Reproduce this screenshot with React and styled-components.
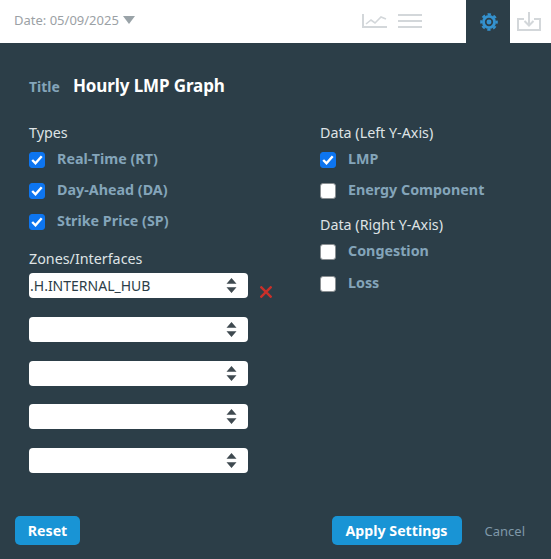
import React from 'react';
import styled, { createGlobalStyle } from 'styled-components';

const GlobalStyle = createGlobalStyle`
  html, body {
    margin: 0;
    padding: 0;
    background: #2c3e48;
  }
  * {
    box-sizing: border-box;
  }
`;

const Page = styled.div`
  width: 551px;
  height: 559px;
  display: flex;
  flex-direction: column;
  font-family: "Noto Sans", "Open Sans", sans-serif;
  background: #2c3e48;
  overflow: hidden;
`;

const TopBar = styled.div`
  height: 43px;
  display: flex;
  align-items: stretch;
  background: #fff;
`;

const DatePicker = styled.div`
  display: flex;
  align-items: flex-start;
  gap: 4px;
  padding: 11px 0 0 14px;
  font-size: 13px;
  line-height: 18px;
  color: #9ba1a5;
`;

const Caret = styled.span`
  width: 0;
  height: 0;
  margin-top: 5px;
  border-left: 6px solid transparent;
  border-right: 6px solid transparent;
  border-top: 8px solid #9aa3a8;
`;

const ChartTools = styled.div`
  margin-left: auto;
  display: flex;
  align-items: flex-start;
  gap: 11px;
  padding: 13px 44px 0 0;
`;

const TabIcon = styled.div`
  width: ${(props) => props.width}px;
  display: flex;
  justify-content: center;
  padding: 12px ${(props) => props.padRight || 0}px 0 ${(props) => props.padLeft || 0}px;
  background: ${(props) => (props.active ? '#2c3e48' : '#fff')};
`;

const Body = styled.div`
  flex: 1;
  display: flex;
  flex-direction: column;
  padding: 31px 15px 14px;
`;

const TitleRow = styled.div`
  display: flex;
  align-items: baseline;
  gap: 13px;
  padding-left: 14px;
  height: 24px;
`;

const TitleLabel = styled.span`
  font-size: 14px;
  font-weight: 700;
  color: #84a5ba;
`;

const TitleText = styled.span`
  font-size: 17px;
  font-weight: 700;
  letter-spacing: -0.1px;
  color: #fff;
`;

const Columns = styled.div`
  display: flex;
  margin-top: 25px;
  padding-left: 14px;
`;

const LeftColumn = styled.div`
  width: 291px;
`;

const RightColumn = styled.div`
  flex: 1;
`;

const SectionLabel = styled.div`
  font-size: 14.3px;
  line-height: 20px;
  height: 21px;
  color: #dfe3e5;
  margin-top: ${(props) => props.gap || 0}px;
`;

const CheckRow = styled.label`
  display: flex;
  align-items: center;
  gap: 12px;
  height: 31px;
  margin-top: ${(props) => props.gap || 0}px;
`;

const CheckBox = styled.span`
  width: 16px;
  height: 16px;
  flex: none;
  margin-top: 1px;
  display: flex;
  align-items: center;
  justify-content: center;
  border-radius: 3px;
  background: ${(props) => (props.checked ? '#0d75f0' : '#fff')};
  border: 1px solid ${(props) => (props.checked ? '#0d75f0' : '#8a8f92')};
`;

const CheckText = styled.span`
  font-size: 14.3px;
  font-weight: 700;
  margin-top: -2px;
  color: #84a5ba;
`;

const ZoneRow = styled.div`
  display: flex;
  align-items: flex-start;
  gap: 12px;
  margin-top: ${(props) => props.gap}px;
`;

const ZoneSelect = styled.div`
  width: 219px;
  height: 25px;
  display: flex;
  align-items: center;
  justify-content: space-between;
  padding: 0 11px 0 1px;
  background: #fff;
  border-radius: 4px;
  font-size: 14px;
  color: #2c3e48;
`;

const Footer = styled.div`
  margin-top: auto;
  display: flex;
  align-items: center;
`;

const ActionButton = styled.button`
  width: ${(props) => props.width}px;
  height: 29px;
  padding: 0;
  border: none;
  border-radius: 5px;
  background: #1994d5;
  color: #fff;
  font-family: inherit;
  font-size: 14.2px;
  font-weight: 700;
`;

const ApplyGroup = styled.div`
  margin-left: auto;
  display: flex;
  align-items: center;
  gap: 23px;
  padding-right: 11px;
`;

const CancelLink = styled.span`
  font-size: 13px;
  color: #7f98a8;
`;

const RemoveButton = styled.span`
  display: flex;
  margin-top: 13px;
`;

const ChartIcon = () => (
  <svg width="25" height="16" viewBox="0 0 25 16" fill="none" stroke="#d3d7da" strokeWidth="2">
    <path d="M1 1v13h24" />
    <path d="M4 11l5-4 4 3 6-6 5 2" strokeWidth="1.6" />
  </svg>
);

const ListIcon = () => (
  <svg width="24" height="15" viewBox="0 0 24 15" fill="none" stroke="#d3d7da" strokeWidth="2">
    <path d="M0 2h24M0 8h24M0 14h24" />
  </svg>
);

const GearIcon = () => (
  <svg width="20" height="20" viewBox="0 0 20 20" fill="none">
    <circle cx="10" cy="10" r="7" fill="#3492cf" />
    <circle cx="10" cy="10" r="7.800" stroke="#3492cf" strokeWidth="2" strokeDasharray="3.400 2.730" strokeDashoffset="1.700" />
    <circle cx="10" cy="10" r="3.300" stroke="#2c3e48" strokeWidth="1.700" />
  </svg>
);

const DownloadIcon = () => (
  <svg width="24" height="19" viewBox="0 0 24 19" fill="none" stroke="#d3d7da" strokeWidth="2">
    <path d="M7 7H1v11h22V7h-6" />
    <path d="M12 0v13M7.500 9l4.500 4.500 4.500-4.500" />
  </svg>
);

const TickIcon = () => (
  <svg width="12" height="10" viewBox="0 0 12 10" fill="none" stroke="#fff" strokeWidth="2.400">
    <path d="M1.200 5l3.300 3.300 6.200-7" />
  </svg>
);

const SpinnerIcon = () => (
  <svg width="11" height="15" viewBox="0 0 11 15" fill="#3f4a50">
    <path d="M5.500 0l5 5.800H.5zM.5 9.200h10l-5 5.800z" />
  </svg>
);

const RemoveIcon = () => (
  <svg width="12" height="12" viewBox="0 0 12 12" fill="none" stroke="#c8302a" strokeWidth="2.400">
    <path d="M.5.500l11 11M11.500.500l-11 11" />
  </svg>
);

const Check = ({ checked, gap, children }) => (
  <CheckRow gap={gap}>
    <CheckBox checked={checked}>{checked && <TickIcon />}</CheckBox>
    <CheckText>{children}</CheckText>
  </CheckRow>
);

const Zone = ({ gap, value, onRemove }) => (
  <ZoneRow gap={gap}>
    <ZoneSelect>
      <span>{value}</span>
      <SpinnerIcon />
    </ZoneSelect>
    {onRemove && (
      <RemoveButton>
        <RemoveIcon />
      </RemoveButton>
    )}
  </ZoneRow>
);

export default function App() {
  return (
    <Page>
      <GlobalStyle />
      <TopBar>
        <DatePicker>
          Date: 05/09/2025
          <Caret />
        </DatePicker>
        <ChartTools>
          <ChartIcon />
          <ListIcon />
        </ChartTools>
        <TabIcon width={44} padLeft={2} active>
          <GearIcon />
        </TabIcon>
        <TabIcon width={41} padRight={3}>
          <DownloadIcon />
        </TabIcon>
      </TopBar>
      <Body>
        <TitleRow>
          <TitleLabel>Title</TitleLabel>
          <TitleText>Hourly LMP Graph</TitleText>
        </TitleRow>
        <Columns>
          <LeftColumn>
            <SectionLabel>Types</SectionLabel>
            <Check checked>Real-Time (RT)</Check>
            <Check checked>Day-Ahead (DA)</Check>
            <Check checked>Strike Price (SP)</Check>
            <SectionLabel gap={12}>Zones/Interfaces</SectionLabel>
            <Zone gap={3} value=".H.INTERNAL_HUB" onRemove />
            <Zone gap={18.75} />
            <Zone gap={18.75} />
            <Zone gap={18.75} />
            <Zone gap={18.75} />
          </LeftColumn>
          <RightColumn>
            <SectionLabel>Data (Left Y-Axis)</SectionLabel>
            <Check checked>LMP</Check>
            <Check>Energy Component</Check>
            <SectionLabel gap={9}>Data (Right Y-Axis)</SectionLabel>
            <Check>Congestion</Check>
            <Check gap={1}>Loss</Check>
          </RightColumn>
        </Columns>
        <Footer>
          <ActionButton width={65}>Reset</ActionButton>
          <ApplyGroup>
            <ActionButton width={130}>Apply Settings</ActionButton>
            <CancelLink>Cancel</CancelLink>
          </ApplyGroup>
        </Footer>
      </Body>
    </Page>
  );
}
